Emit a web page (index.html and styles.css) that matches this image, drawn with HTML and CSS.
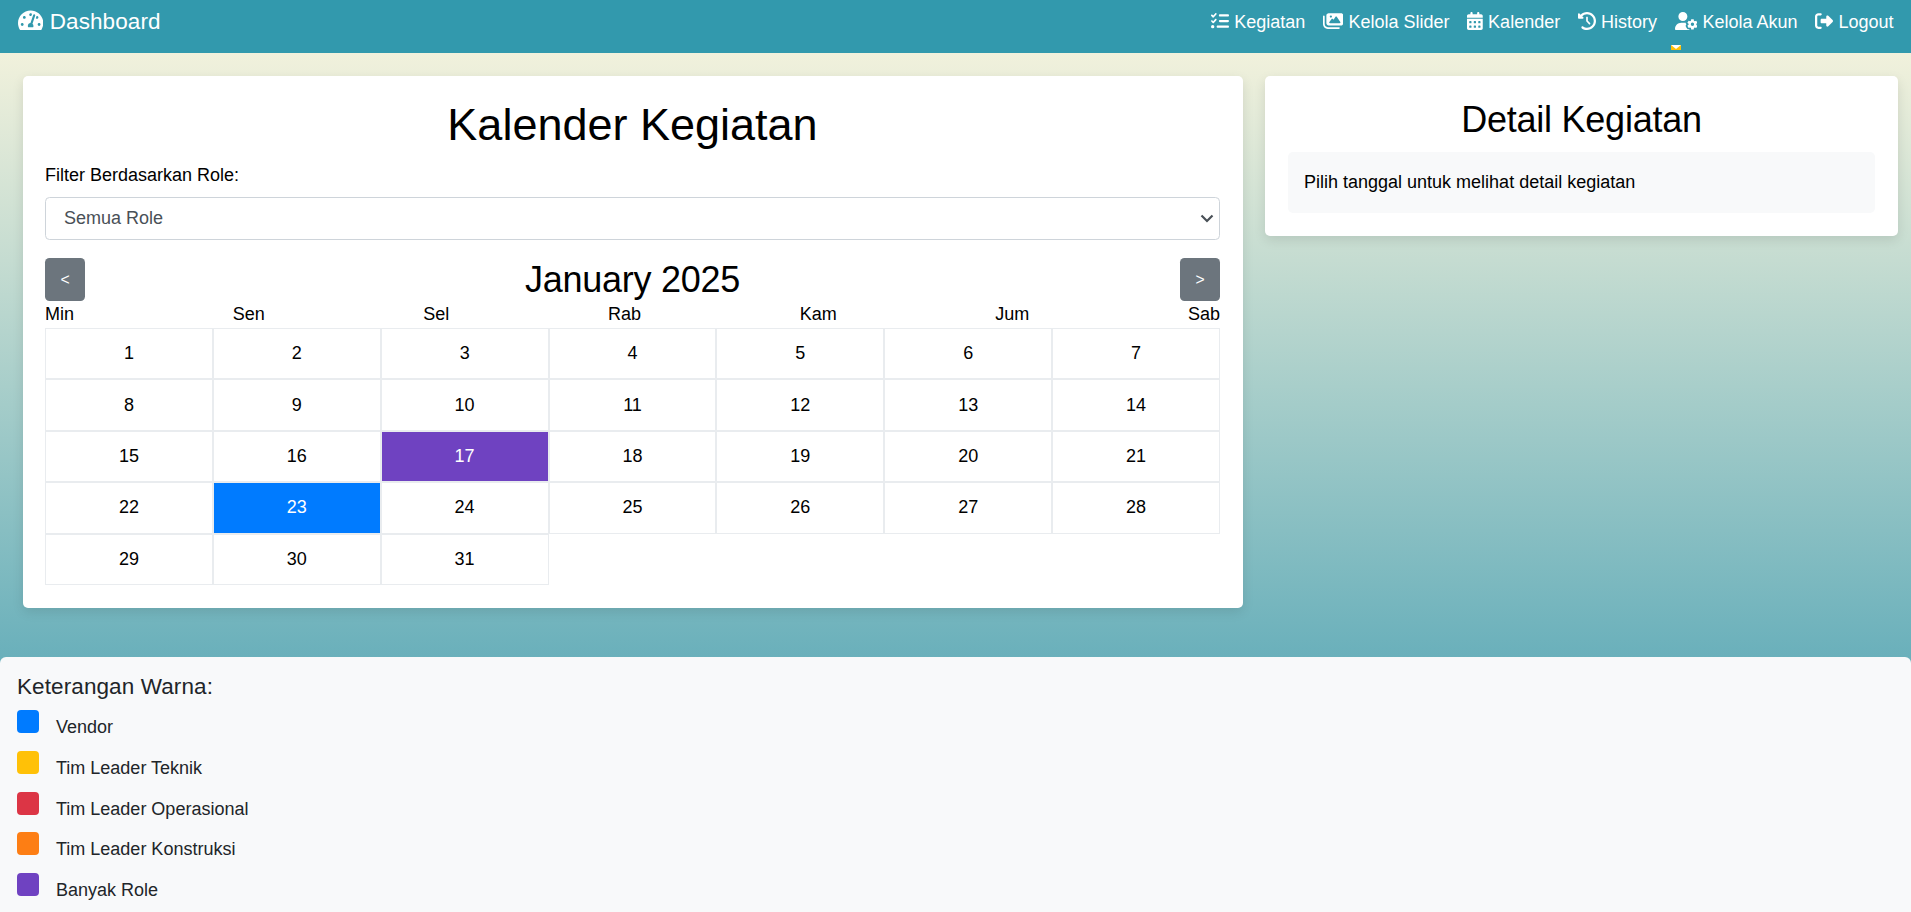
FILE: index.html
```html
<!DOCTYPE html>
<html lang="id">
<head>
<meta charset="utf-8">
<title>Dashboard</title>
<link rel="stylesheet" href="styles.css">
</head>
<body>
<nav class="navbar">
  <a class="brand"><svg class="icon" viewBox="0 0 576 512"><path d="M288 32C128.94 32 0 160.94 0 320c0 52.8 14.25 102.26 39.06 144.8 5.61 9.62 16.3 15.2 27.44 15.2h443c11.14 0 21.83-5.58 27.44-15.2C561.75 422.26 576 372.8 576 320c0-159.06-128.94-288-288-288zm0 64c14.71 0 26.58 10.13 30.32 23.65-1.11 2.26-2.64 4.23-3.45 6.67l-9.22 27.67c-5.13 3.49-10.97 6.01-17.64 6.01-17.67 0-32-14.33-32-32S270.33 96 288 96zM96 384c-17.67 0-32-14.33-32-32s14.33-32 32-32 32 14.33 32 32-14.33 32-32 32zm48-160c-17.67 0-32-14.33-32-32s14.33-32 32-32 32 14.33 32 32-14.33 32-32 32zm246.77-72.41l-61.33 184C343.13 347.33 352 364.54 352 384c0 11.72-3.38 22.55-8.88 32H232.88c-5.5-9.45-8.88-20.28-8.88-32 0-33.94 26.5-61.43 59.9-63.59l61.34-184.01c4.17-12.56 17.73-19.45 30.36-15.17 12.57 4.19 19.35 17.79 15.17 30.36zm14.66 57.2l15.52-46.55c3.47-1.29 7.13-2.23 11.05-2.23 17.67 0 32 14.33 32 32s-14.33 32-32 32c-11.38-.01-20.89-6.28-26.57-15.22zM480 384c-17.67 0-32-14.33-32-32s14.33-32 32-32 32 14.33 32 32-14.33 32-32 32z"/></svg> Dashboard</a>
  <div class="links">
    <a class="link"><svg class="icon" viewBox="0 0 512 512"><path d="M152.1 38.2c9.9 8.9 10.7 24 1.8 33.9l-72 80c-4.400 4.900-10.600 7.800-17.200 7.900s-12.900-2.400-17.600-7L7 113C-2.300 103.600-2.300 88.400 7 79s24.600-9.400 33.900 0l22.100 22.100 55.100-61.200c8.900-9.900 24-10.700 33.900-1.800zm0 160c9.900 8.900 10.700 24 1.800 33.900l-72 80c-4.400 4.900-10.600 7.800-17.200 7.900s-12.900-2.400-17.600-7L7 273c-9.400-9.400-9.400-24.600 0-33.900s24.600-9.400 33.900 0l22.100 22.100 55.100-61.200c8.900-9.900 24-10.700 33.900-1.800zM224 96c0-17.700 14.300-32 32-32H480c17.700 0 32 14.300 32 32s-14.300 32-32 32H256c-17.700 0-32-14.300-32-32zm0 160c0-17.700 14.300-32 32-32H480c17.700 0 32 14.300 32 32s-14.300 32-32 32H256c-17.700 0-32-14.300-32-32zM160 416c0-17.700 14.300-32 32-32H480c17.700 0 32 14.300 32 32s-14.300 32-32 32H192c-17.700 0-32-14.300-32-32zM48 368a48 48 0 1 1 0 96 48 48 0 1 1 0-96z"/></svg> Kegiatan</a>
    <a class="link"><svg class="icon" viewBox="0 0 576 512"><path d="M160 32c-35.300 0-64 28.700-64 64V320c0 35.300 28.700 64 64 64H512c35.300 0 64-28.700 64-64V96c0-35.300-28.700-64-64-64H160zM396 138.700l96 144c4.900 7.400 5.400 16.800 1.200 24.600S480.900 320 472 320H328 280 200c-9.200 0-17.600-5.300-21.600-13.600s-2.900-18.200 2.900-25.400l64-80c4.600-5.700 11.400-9 18.700-9s14.200 3.300 18.700 9l17.300 21.600 56-84C360.500 132 368 128 376 128s15.500 4 20 10.700zM192 128a32 32 0 1 1 64 0 32 32 0 1 1 -64 0zM48 120c0-13.300-10.700-24-24-24S0 106.700 0 120V344c0 75.100 60.900 136 136 136H456c13.300 0 24-10.700 24-24s-10.700-24-24-24H136c-48.600 0-88-39.400-88-88V120z"/></svg> Kelola Slider</a>
    <a class="link"><svg class="icon" viewBox="0 0 448 512"><path d="M128 0c17.700 0 32 14.300 32 32V64H288V32c0-17.700 14.300-32 32-32s32 14.300 32 32V64h48c26.500 0 48 21.500 48 48v48H0V112C0 85.500 21.500 64 48 64H96V32c0-17.700 14.300-32 32-32zM0 192H448V464c0 26.500-21.500 48-48 48H48c-26.500 0-48-21.500-48-48V192zm64 80v32c0 8.800 7.200 16 16 16h32c8.800 0 16-7.200 16-16V272c0-8.800-7.200-16-16-16H80c-8.800 0-16 7.200-16 16zm128 0v32c0 8.800 7.200 16 16 16h32c8.800 0 16-7.200 16-16V272c0-8.800-7.200-16-16-16H208c-8.800 0-16 7.200-16 16zm144-16c-8.800 0-16 7.200-16 16v32c0 8.800 7.200 16 16 16h32c8.800 0 16-7.200 16-16V272c0-8.800-7.200-16-16-16H336zM64 400v32c0 8.800 7.200 16 16 16h32c8.800 0 16-7.200 16-16V400c0-8.800-7.200-16-16-16H80c-8.800 0-16 7.200-16 16zm144-16c-8.800 0-16 7.200-16 16v32c0 8.800 7.200 16 16 16h32c8.800 0 16-7.200 16-16V400c0-8.800-7.200-16-16-16H208zm112 16v32c0 8.800 7.200 16 16 16h32c8.800 0 16-7.200 16-16V400c0-8.800-7.200-16-16-16H336c-8.800 0-16 7.200-16 16z"/></svg> Kalender</a>
    <a class="link"><svg class="icon" viewBox="0 0 512 512"><path d="M75 75L41 41C25.900 25.900 0 36.600 0 57.900V168c0 13.300 10.700 24 24 24H134.100c21.400 0 32.100-25.900 17-41l-30.800-30.800C155 85.500 203 64 256 64c106 0 192 86 192 192s-86 192-192 192c-40.800 0-78.600-12.700-109.700-34.400c-14.500-10.100-34.400-6.600-44.600 7.900s-6.600 34.400 7.900 44.600C151.200 495 201.700 512 256 512c141.400 0 256-114.600 256-256S397.400 0 256 0C185.300 0 121.300 28.700 75 75zm181 53c-13.300 0-24 10.700-24 24V256c0 6.400 2.500 12.500 7 17l72 72c9.400 9.400 24.600 9.400 33.900 0s9.400-24.600 0-33.900l-65-65V152c0-13.300-10.700-24-24-24z"/></svg> History</a>
    <a class="link"><svg class="icon" viewBox="0 0 640 512"><path fill-rule="evenodd" d="M224 0a128 128 0 1 1 0 256 128 128 0 1 1 0-256zM178.300 304h91.400c11.800 0 23.400 1.200 34.500 3.300-2.100 18.500 7.400 35.600 21.800 44.800-16.600 10.600-26.700 31.600-20 53.300 4 12.900 9.400 25.500 16.400 37.600s15.200 23.100 24.400 33c15.700 16.900 39.600 18.400 57.200 8.700v.9c0 9.200 2.700 18.500 7.900 26.300H29.700C13.300 512 0 498.700 0 482.300 0 383.800 79.800 304 178.300 304z"/><path fill-rule="evenodd" d="M460 204h72l6 43 26 15 40-16 36 62-34 27v30l34 27-36 62-40-16-26 15-6 43h-72l-6-43-26-15-40 16-36-62 34-27v-30l-34-27 36-62 40 16 26-15zM496 302a48 48 0 1 0 0 96 48 48 0 1 0 0-96z"/></svg> Kelola Akun<span class="bubble"></span></a>
    <a class="link"><svg class="icon" viewBox="0 0 512 512"><path d="M377.900 105.900L500.700 228.700c7.200 7.200 11.300 17.100 11.300 27.300s-4.100 20.100-11.300 27.300L377.900 406.100c-6.400 6.400-15 9.900-24 9.900c-18.700 0-33.900-15.200-33.900-33.900V320H192c-17.700 0-32-14.300-32-32V224c0-17.700 14.300-32 32-32H320V129.900c0-18.700 15.200-33.900 33.900-33.900c9 0 17.600 3.600 24 9.900zM160 96H96c-17.700 0-32 14.300-32 32V384c0 17.700 14.300 32 32 32h64c17.700 0 32 14.300 32 32s-14.300 32-32 32H96c-53 0-96-43-96-96V128C0 75 43 32 96 32h64c17.700 0 32 14.300 32 32s-14.300 32-32 32z"/></svg> Logout</a>
  </div>
</nav>
<main class="content">
  <section class="card calendar">
    <h1 class="title">Kalender Kegiatan</h1>
    <div class="label">Filter Berdasarkan Role:</div>
    <div class="select">Semua Role<svg class="caret" viewBox="0 0 14 9"><path d="M1.500 1.500 7 7l5.500-5.500"/></svg></div>
    <div class="month"><button class="step">&lt;</button><h2 class="subtitle">January 2025</h2><button class="step">&gt;</button></div>
    <div class="weekdays"><span>Min</span><span>Sen</span><span>Sel</span><span>Rab</span><span>Kam</span><span>Jum</span><span>Sab</span></div>
    <div class="days">
      <div class="day">1</div><div class="day">2</div><div class="day">3</div><div class="day">4</div><div class="day">5</div><div class="day">6</div><div class="day">7</div>
      <div class="day">8</div><div class="day">9</div><div class="day">10</div><div class="day">11</div><div class="day">12</div><div class="day">13</div><div class="day">14</div>
      <div class="day">15</div><div class="day">16</div><div class="day many">17</div><div class="day">18</div><div class="day">19</div><div class="day">20</div><div class="day">21</div>
      <div class="day">22</div><div class="day vendor">23</div><div class="day">24</div><div class="day">25</div><div class="day">26</div><div class="day">27</div><div class="day">28</div>
      <div class="day">29</div><div class="day">30</div><div class="day">31</div>
    </div>
  </section>
  <section class="card detail">
    <h2 class="subtitle">Detail Kegiatan</h2>
    <div class="message">Pilih tanggal untuk melihat detail kegiatan</div>
  </section>
</main>
<footer class="legend">
  <h5 class="legend-title">Keterangan Warna:</h5>
  <div class="key"><span class="swatch vendor"></span>Vendor</div>
  <div class="key"><span class="swatch teknik"></span>Tim Leader Teknik</div>
  <div class="key"><span class="swatch operasional"></span>Tim Leader Operasional</div>
  <div class="key"><span class="swatch konstruksi"></span>Tim Leader Konstruksi</div>
  <div class="key"><span class="swatch many"></span>Banyak Role</div>
</footer>
</body>
</html>
```
FILE: styles.css
```css
* { box-sizing: border-box; }
body {
  margin: 0;
  height: 912px;
  overflow: hidden;
  display: flex;
  flex-direction: column;
  font: 18px/27px "Liberation Sans", Arial, sans-serif;
  color: #000;
  background: linear-gradient(to bottom, #f1f1dc 53px, #c5dcd1 260px, #6ab0bb 657px);
}
h1, h2, h5 { margin: 0; font-weight: 400; line-height: 1.2; }
.navbar {
  height: 53px;
  flex: none;
  display: flex;
  justify-content: space-between;
  padding: 4px 17.500px 0 18px;
  color: #fff;
  background: #3299ad;
}
.brand { font-size: 22.5px; line-height: 35px; letter-spacing: 0.1px; white-space: pre; }
.links { display: flex; gap: 17.900px; padding-top: 5px; }
.link { position: relative; white-space: pre; }
.icon { height: 1em; vertical-align: -0.125em; fill: currentColor; }
.bubble {
  position: absolute;
  left: -4px;
  top: 36px;
  width: 10px;
  height: 5px;
  background: #ffc107;
}
.bubble::before {
  content: "";
  display: block;
  border: 5px solid transparent;
  border-top: 4px solid #fff;
  border-bottom: 0;
}
.content {
  flex: none;
  height: 604px;
  display: flex;
  align-items: flex-start;
  gap: 22px;
  padding: 23px 13px 0 23px;
}
.card {
  background: #fff;
  border-radius: 5px;
  padding: 22px 23px 22px 22px;
  box-shadow: 0 4px 12px rgba(0, 0, 0, 0.1);
}
.calendar { width: 1220px; height: 532px; }
.detail { flex: 1; height: 160px; padding-left: 23px; }
.title { font-size: 45px; text-align: center; margin-bottom: 10px; }
.subtitle { font-size: 36px; letter-spacing: -0.25px; text-align: center; }
.label { margin-bottom: 8px; }
.select {
  height: 43px;
  display: flex;
  align-items: center;
  justify-content: space-between;
  padding: 0 5px 0 18px;
  border: 1px solid #ced4da;
  border-radius: 4.500px;
  color: #495057;
}
.caret { width: 14px; height: 9px; fill: none; stroke: #495057; stroke-width: 2.200; }
.month { display: flex; justify-content: space-between; align-items: center; margin-top: 18px; height: 43px; }
.step {
  width: 40px;
  height: 43px;
  padding: 0;
  border: 0;
  border-radius: 4.500px;
  font: 15.750px "Liberation Sans", Arial, sans-serif;
  color: #fff;
  background: #6c757d;
}
.weekdays { display: flex; justify-content: space-between; }
.days { display: grid; grid-template-columns: repeat(7, 1fr); grid-auto-rows: 51.400px; }
.day { border: 1px solid #e9ecef; display: grid; place-items: center; }
.vendor { background: #007bff; }
.many { background: #6f42c1; }
.day.vendor, .day.many { color: #fff; }
.teknik { background: #ffc107; }
.operasional { background: #dc3545; }
.konstruksi { background: #fd7e14; }
.message {
  margin-top: 11px;
  height: 61px;
  padding: 17px 16px;
  border-radius: 5px;
  background: #f8f9fa;
}
.legend {
  flex: 1;
  padding: 16px 17px;
  border-radius: 6px 6px 0 0;
  color: #212529;
  background: #f8f9fa;
}
.legend-title { font-size: 22.5px; letter-spacing: 0.1px; height: 37px; line-height: 28px; }
.key { display: flex; gap: 17px; height: 40.800px; line-height: 34px; }
.swatch { width: 22px; height: 23px; border-radius: 4px; }
```
